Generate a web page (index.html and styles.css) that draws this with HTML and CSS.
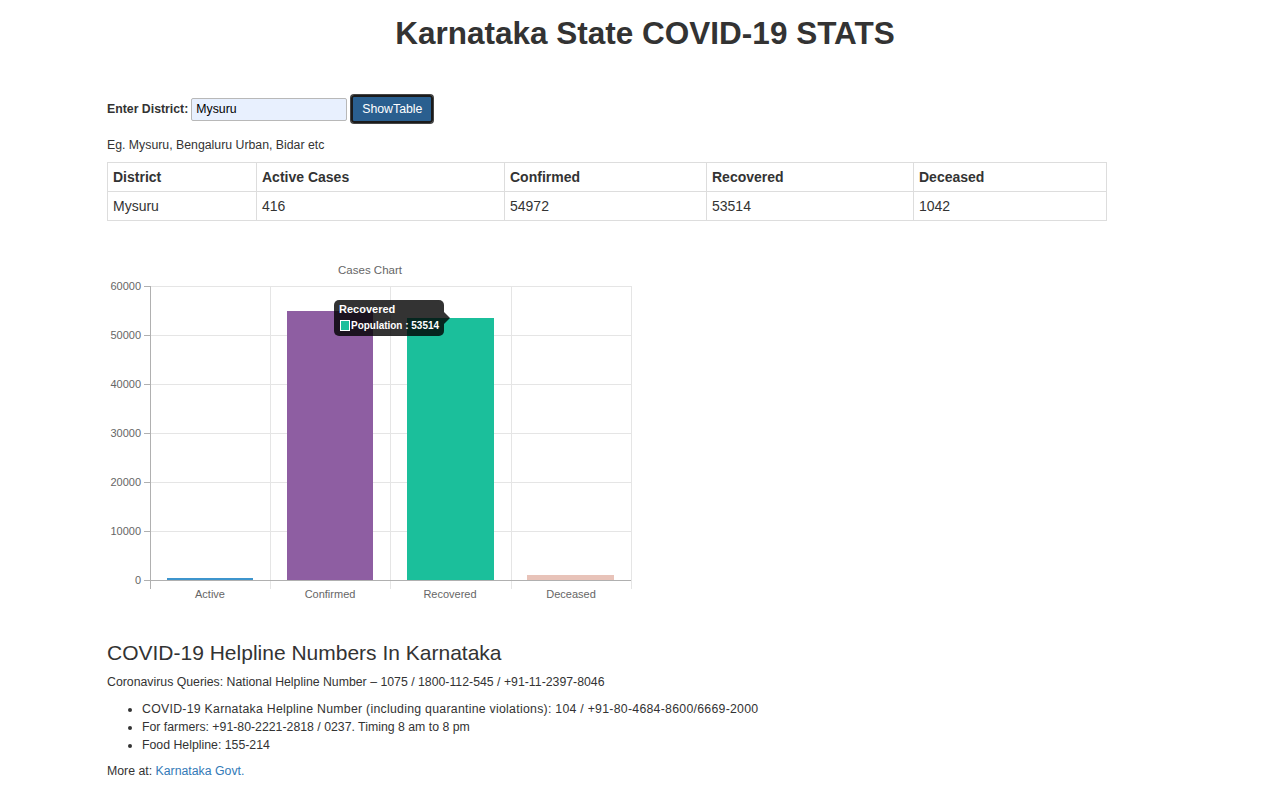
FILE: index.html
```html
<!DOCTYPE html>
<html lang="en">
<head>
<meta charset="utf-8">
<title>Karnataka State COVID-19 STATS</title>
<link rel="stylesheet" href="styles.css">
</head>
<body>
<h1 class="page-title">Karnataka State COVID-19 STATS</h1>
<main class="content">
  <form class="district-form">
    <label class="district-label" for="district">Enter District:</label>
    <input class="district-input" id="district" type="text" value="Mysuru">
    <button class="show-btn" type="button">ShowTable</button>
  </form>
  <p class="hint">Eg. Mysuru, Bengaluru Urban, Bidar etc</p>
  <table class="stats">
    <colgroup>
      <col class="c1"><col class="c2"><col class="c3"><col class="c4"><col class="c5">
    </colgroup>
    <thead>
      <tr><th>District</th><th>Active Cases</th><th>Confirmed</th><th>Recovered</th><th>Deceased</th></tr>
    </thead>
    <tbody>
      <tr><td>Mysuru</td><td>416</td><td>54972</td><td>53514</td><td>1042</td></tr>
    </tbody>
  </table>

  <div class="chart">
    <svg width="533" height="347" viewBox="0 0 533 347" xmlns="http://www.w3.org/2000/svg" font-family="Liberation Sans, Arial, sans-serif">
      <text x="263" y="16" font-size="11.5" fill="#666" text-anchor="middle">Cases Chart</text>
      <g stroke="#e5e5e5" stroke-width="1">
        <line x1="43" y1="28.5" x2="524" y2="28.5"/>
        <line x1="43" y1="77.5" x2="524" y2="77.5"/>
        <line x1="43" y1="126.5" x2="524" y2="126.5"/>
        <line x1="43" y1="175.5" x2="524" y2="175.5"/>
        <line x1="43" y1="224.5" x2="524" y2="224.5"/>
        <line x1="43" y1="273.5" x2="524" y2="273.5"/>
        <line x1="163.5" y1="28" x2="163.5" y2="331"/>
        <line x1="283.5" y1="28" x2="283.5" y2="331"/>
        <line x1="404.5" y1="28" x2="404.5" y2="331"/>
        <line x1="524.5" y1="28" x2="524.5" y2="331"/>
      </g>
      <g stroke="#b0b0b0" stroke-width="1">
        <line x1="37" y1="28.5" x2="43" y2="28.5"/>
        <line x1="37" y1="77.5" x2="43" y2="77.5"/>
        <line x1="37" y1="126.5" x2="43" y2="126.5"/>
        <line x1="37" y1="175.5" x2="43" y2="175.5"/>
        <line x1="37" y1="224.5" x2="43" y2="224.5"/>
        <line x1="37" y1="273.5" x2="43" y2="273.5"/>
        <line x1="37" y1="322.5" x2="524" y2="322.5"/>
        <line x1="43.5" y1="28" x2="43.5" y2="331"/>
      </g>
      <g font-size="11" fill="#666" text-anchor="end">
        <text x="34" y="32">60000</text>
        <text x="34" y="81">50000</text>
        <text x="34" y="130">40000</text>
        <text x="34" y="179">30000</text>
        <text x="34" y="228">20000</text>
        <text x="34" y="277">10000</text>
        <text x="34" y="326">0</text>
      </g>
      <rect x="60" y="320" width="86" height="2" fill="#3e95cd"/>
      <rect x="180" y="53" width="86" height="269" fill="#8e5ea2"/>
      <rect x="300" y="60" width="87" height="262" fill="#1bbf9b"/>
      <rect x="420" y="317" width="87" height="5" fill="#e8c3b9"/>
      <g font-size="11" fill="#666" text-anchor="middle">
        <text x="103" y="340">Active</text>
        <text x="223" y="340">Confirmed</text>
        <text x="343" y="340">Recovered</text>
        <text x="464" y="340">Deceased</text>
      </g>
      <g class="tooltip">
        <rect x="227" y="42" width="110" height="36" rx="5" fill="rgba(0,0,0,0.8)"/>
        <polygon points="337,54 343,60 337,66" fill="rgba(0,0,0,0.8)"/>
        <text x="232" y="55" font-size="11" font-weight="bold" fill="#fff">Recovered</text>
        <rect x="233.5" y="62.5" width="9" height="10" fill="#1bbf9b" stroke="#fff" stroke-width="1"/>
        <text x="244" y="71" font-size="10.5" font-weight="bold" fill="#fff" textLength="88" lengthAdjust="spacingAndGlyphs">Population : 53514</text>
      </g>
    </svg>
  </div>

  <h3 class="help-title">COVID-19 Helpline Numbers In Karnataka</h3>
  <p class="help-text">Coronavirus Queries: National Helpline Number – 1075 / 1800-112-545 / +91-11-2397-8046</p>
  <ul class="help-list">
    <li class="help-item-wide">COVID-19 Karnataka Helpline Number (including quarantine violations): 104 / +91-80-4684-8600/6669-2000</li>
    <li>For farmers: +91-80-2221-2818 / 0237. Timing 8 am to 8 pm</li>
    <li>Food Helpline: 155-214</li>
  </ul>
  <p class="more">More at: <a class="more-link" href="#">Karnataka Govt.</a></p>
</main>
</body>
</html>
```
FILE: styles.css
```css
html, body {
  margin: 0;
  padding: 0;
  background: #fff;
}
body {
  font-family: "Liberation Sans", Arial, sans-serif;
  font-size: 12.3px;
  line-height: 18px;
  color: #333;
}
.page-title {
  margin: 17px 0 0 0;
  padding-left: 10px;
  font-size: 31.5px;
  line-height: 33px;
  font-weight: bold;
  text-align: center;
  color: #333;
}
.content {
  margin-left: 107px;
  width: 1000px;
}
.district-form {
  margin-top: 45px;
  display: flex;
  align-items: center;
  height: 28px;
}
.district-label {
  font-weight: bold;
  font-size: 12.3px;
  margin-right: 3px;
}
.district-input {
  box-sizing: border-box;
  width: 156px;
  height: 23px;
  margin: 0 4px 0 0;
  padding: 0 4px;
  border: 1px solid #b8b8b8;
  border-radius: 2px;
  background: #e8f0fe;
  font-family: "Liberation Sans", Arial, sans-serif;
  font-size: 12.3px;
  color: #000;
}
.show-btn {
  box-sizing: border-box;
  width: 82px;
  height: 28px;
  margin: 0;
  padding: 0;
  border: 1px solid #ffffff;
  outline: 2px solid #1b1b1b;
  outline-offset: -2px;
  border-radius: 3px;
  box-shadow: 0 0 0 1px #444;
  background: #2a5f8f;
  color: #fff;
  font-family: "Liberation Sans", Arial, sans-serif;
  font-size: 12.3px;
}
.hint {
  margin: 13px 0 0 0;
}
.stats {
  margin-top: 8px;
  width: 1000px;
  border-collapse: collapse;
  border: 1px solid #ddd;
  font-size: 14px;
  line-height: 20px;
}
.stats th, .stats td {
  border: 1px solid #ddd;
  padding: 4px 5px;
  text-align: left;
}
.stats th {
  font-weight: bold;
}
.c1 { width: 149px; }
.c2 { width: 248px; }
.c3 { width: 202px; }
.c4 { width: 207px; }
.c5 { width: 193px; }
.chart {
  margin-top: 37px;
  height: 347px;
}
.chart svg {
  display: block;
}
.help-title {
  margin: 37px 0 0 0;
  font-size: 21px;
  line-height: 22px;
  font-weight: normal;
}
.help-text {
  margin: 9px 0 0 0;
}
.help-list {
  margin: 9px 0 0 0;
  padding-left: 35px;
}
.help-item-wide {
  letter-spacing: 0.27px;
}
.more {
  margin: 8px 0 0 0;
}
.more-link {
  color: #337ab7;
  text-decoration: none;
}
```
